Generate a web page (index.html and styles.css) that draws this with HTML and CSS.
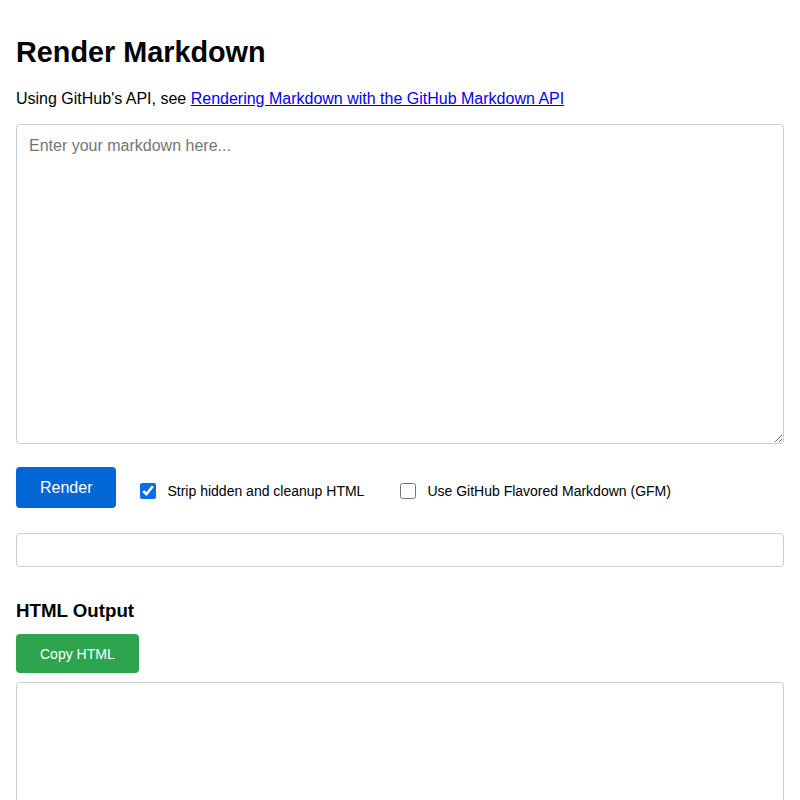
FILE: index.html
```html
<!DOCTYPE html>
<html lang="en">
<head>
  <meta charset="UTF-8">
  <meta name="viewport" content="width=device-width, initial-scale=1.0">
  <title>Render Markdown</title>
  <link rel="stylesheet" href="styles.css">
</head>
<body>
  <h1>Render Markdown</h1>
  <p class="intro">Using GitHub's API, see <a href="#">Rendering Markdown with the GitHub Markdown API</a></p>

  <textarea id="markdown" class="input-area" placeholder="Enter your markdown here..."></textarea>

  <div class="controls">
    <button id="render-button" class="btn btn-blue">Render</button>
    <label class="option">
      <input type="checkbox" id="strip" checked>
      <span>Strip hidden and cleanup HTML</span>
    </label>
    <label class="option">
      <input type="checkbox" id="gfm">
      <span>Use GitHub Flavored Markdown (GFM)</span>
    </label>
  </div>

  <input type="text" id="status" class="status-field">

  <h3 class="section-title">HTML Output</h3>
  <button id="copy-button" class="btn btn-green">Copy HTML</button>
  <textarea id="output" class="output-area"></textarea>
</body>
</html>
```

FILE: styles.css
```css
body {
  margin: 0;
  padding: 16px;
  font-family: "Liberation Sans", Arial, sans-serif;
  color: #000;
  background-color: #fff;
}
h1 {
  font-size: 28.8px;
  line-height: 32px;
  margin: 20px 0 22px;
}
.intro {
  font-size: 16px;
  line-height: 18px;
  margin: 0 0 16px;
}
.intro a {
  color: #0000ee;
}
.input-area,
.output-area,
.status-field {
  display: block;
  width: 100%;
  box-sizing: border-box;
  border: 1px solid #ccc;
  border-radius: 4px;
  font-family: "Liberation Sans", Arial, sans-serif;
  font-size: 16px;
  margin: 0;
}
.input-area {
  height: 320px;
  padding: 12px;
  margin-bottom: 23px;
}
.input-area::placeholder {
  color: #757575;
}
.controls {
  display: flex;
  align-items: center;
  height: 41px;
}
.btn {
  color: #fff;
  border: none;
  border-radius: 4px;
  padding: 0 24px;
  font-family: "Liberation Sans", Arial, sans-serif;
  cursor: pointer;
}
.btn-blue {
  background-color: #0366d6;
  font-size: 16px;
  height: 41px;
  margin-right: 24px;
}
.btn-green {
  background-color: #2ea44f;
  font-size: 14px;
  height: 39px;
}
.option {
  display: flex;
  align-items: center;
  font-size: 14px;
  margin-top: 7px;
  margin-right: 36px;
}
.option input {
  width: 16px;
  height: 16px;
  margin: 0 11px 0 0;
  accent-color: #0a6cf0;
}
.status-field {
  height: 34px;
  padding: 6px 10px;
  margin-top: 25px;
}
.section-title {
  font-size: 18.72px;
  line-height: 21px;
  margin: 33px 0 13px;
}
.output-area {
  height: 300px;
  padding: 12px;
  margin-top: 9px;
}
```
